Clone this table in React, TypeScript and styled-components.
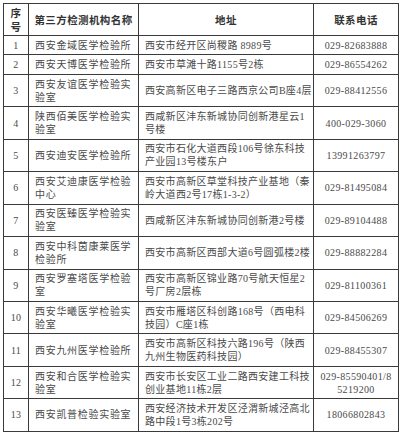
import styled, { createGlobalStyle } from 'styled-components'

const GlobalStyle = createGlobalStyle`
  html, body {
    margin: 0;
    padding: 0;
    background: #fff;
  }
  body {
    font-family: "Liberation Serif", "Noto Sans CJK SC", serif;
  }
`

type Lab = {
  name: string[]
  address: string[]
  phone: string[]
}

const labs: Lab[] = [
  { name: ['西安金域医学检验所'], address: ['西安市经开区尚稷路 8989号'], phone: ['029-82683888'] },
  { name: ['西安天博医学检验所'], address: ['西安市草滩十路1155号2栋'], phone: ['029-86554262'] },
  { name: ['西安友谊医学检验实', '验室'], address: ['西安高新区电子三路西京公司B座4层'], phone: ['029-88412556'] },
  { name: ['陕西佰美医学检验实', '验室'], address: ['西咸新区沣东新城协同创新港星云1', '号楼'], phone: ['400-029-3060'] },
  { name: ['西安迪安医学检验所'], address: ['西安市石化大道西段106号徐东科技', '产业园13号楼东户'], phone: ['13991263797'] },
  { name: ['西安艾迪康医学检验', '中心'], address: ['西安市高新区草堂科技产业基地（秦', '岭大道西2号17栋1-3-2）'], phone: ['029-81495084'] },
  { name: ['西安医臻医学检验实', '验室'], address: ['西咸新区沣东新城协同创新港2号楼'], phone: ['029-89104488'] },
  { name: ['西安中科茵康莱医学', '检验所'], address: ['西安市高新区西部大道6号圆弧楼2楼'], phone: ['029-88882284'] },
  { name: ['西安罗塞塔医学检验', '室'], address: ['西安市高新区锦业路70号航天恒星2', '号厂房2层栋'], phone: ['029-81100361'] },
  { name: ['西安华曦医学检验实', '验室'], address: ['西安市雁塔区科创路168号（西电科', '技园）C座1栋'], phone: ['029-84506269'] },
  { name: ['西安九州医学检验所'], address: ['西安市高新区科技六路196号（陕西', '九州生物医药科技园）'], phone: ['029-88455307'] },
  { name: ['西安和合医学检验实', '验室'], address: ['西安市长安区工业二路西安建工科技', '创业基地11栋2层'], phone: ['029-85590401/8', '5219200'] },
  { name: ['西安凯普检验实验室'], address: ['西安经济技术开发区泾渭新城泾高北', '路中段1号3栋202号'], phone: ['18066802843'] },
]

const Page = styled.div`
  padding: 3px 0 0 3px;
`

const Table = styled.table`
  border-collapse: collapse;
  table-layout: fixed;
  width: 395px;
  color: #4a4a4a;
`

const HeadCell = styled.th<{ $w: number }>`
  box-sizing: border-box;
  width: ${(p) => p.$w}px;
  height: 32px;
  padding: 1px 2px;
  border: 1px solid #3a3a3a;
  font-family: "Noto Sans CJK SC", sans-serif;
  font-size: 10.5px;
  line-height: 14px;
  font-weight: 700;
  color: #333;
  text-align: center;
  letter-spacing: 0.4px;
`

const Cell = styled.td<{ $center?: boolean; $spacing: number }>`
  box-sizing: border-box;
  padding: 2.72px 1px 2.72px ${(p) => (p.$center ? 1 : 6)}px;
  border: 1px solid #3a3a3a;
  font-family: "Liberation Serif", "Noto Sans CJK SC", serif;
  font-size: 10px;
  line-height: 13px;
  letter-spacing: ${(p) => p.$spacing}px;
  text-align: ${(p) => (p.$center ? 'center' : 'left')};
  white-space: nowrap;
  vertical-align: middle;
  overflow: hidden;
`

const Line = styled.div`
  height: 13px;
`

const Lines = ({ items }: { items: string[] }) => (
  <>
    {items.map((t) => (
      <Line key={t}>{t}</Line>
    ))}
  </>
)

export default function App() {
  return (
    <Page>
      <GlobalStyle />
      <Table>
        <thead>
          <tr>
            <HeadCell $w={25}>
              序<br />号
            </HeadCell>
            <HeadCell $w={110}>第三方检测机构名称</HeadCell>
            <HeadCell $w={175}>地址</HeadCell>
            <HeadCell $w={85}>联系电话</HeadCell>
          </tr>
        </thead>
        <tbody>
          {labs.map((lab, i) => (
            <tr key={lab.phone[0]}>
              <Cell $center $spacing={0.3}>
                {i + 1}
              </Cell>
              <Cell $spacing={0.7}>
                <Lines items={lab.name} />
              </Cell>
              <Cell $spacing={0.3}>
                <Lines items={lab.address} />
              </Cell>
              <Cell $center $spacing={0.35}>
                <Lines items={lab.phone} />
              </Cell>
            </tr>
          ))}
        </tbody>
      </Table>
    </Page>
  )
}
